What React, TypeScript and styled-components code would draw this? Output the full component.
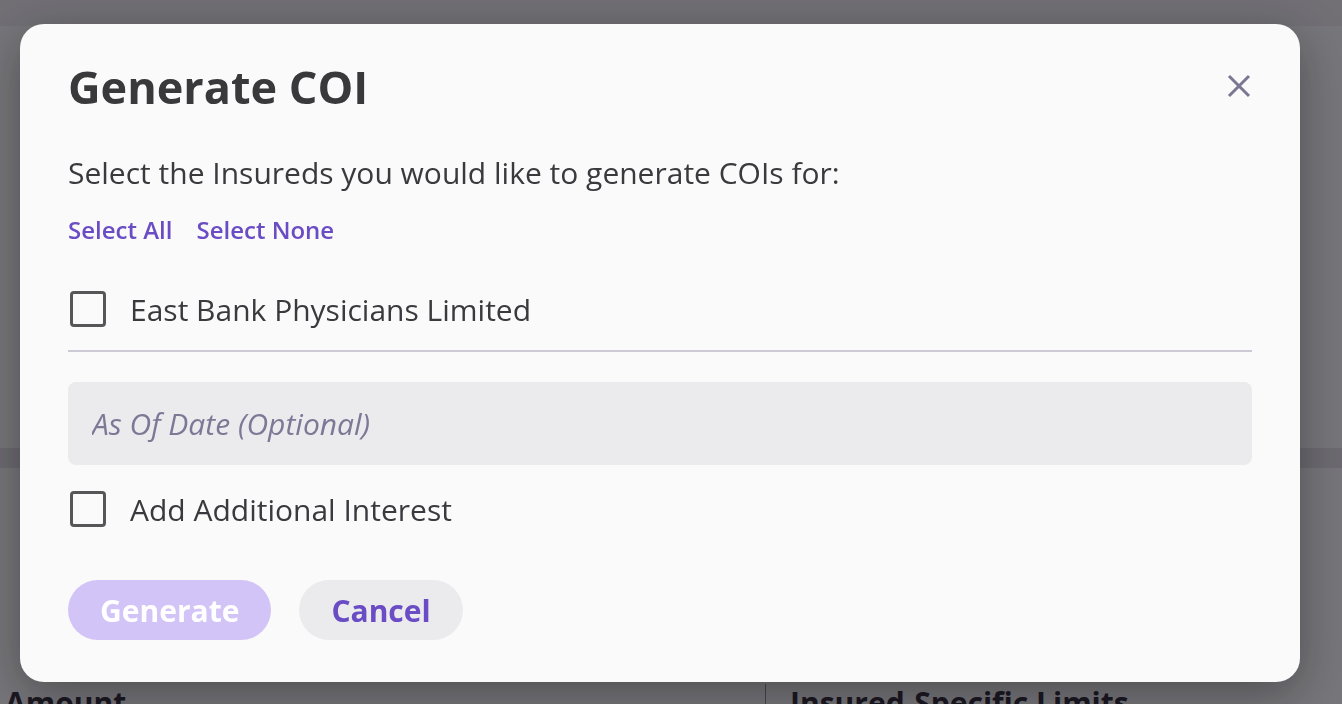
import React, { FC, useState } from "react";
import styled, { createGlobalStyle } from "styled-components";

const GlobalStyle = createGlobalStyle`
    * {
        box-sizing: border-box;
    }

    html, body {
        margin: 0;
        padding: 0;
        height: 100%;
        overflow: hidden;
        font-family: "Open Sans", "Noto Sans", sans-serif;
    }
`

const Page = styled.div`
    position: relative;
    width: 100vw;
    height: 100vh;
    background-color: #f4f4f6;
    display: flex;
    flex-direction: column;
`

const PageTopBar = styled.div`
    height: 26px;
    background-color: #e8e7ec;
`

const PageBody = styled.div`
    flex-grow: 1;
    display: flex;
    flex-direction: column;
    justify-content: flex-end;
`

const PageBand = styled.div`
    height: 20px;
    margin-bottom: 216px;
    background-color: #dddce2;
`

const SectionRow = styled.div`
    display: grid;
    grid-template-columns: 765px 1fr;
    height: 20px;
    overflow: hidden;
`

const SectionTitle = styled.div<{ divided?: boolean }>`
    font-size: 30px;
    font-weight: 700;
    line-height: 1;
    padding: 4px 0 0 ${p => p.divided ? "24px" : "5px"};
    color: #2a2535;
    border-left: ${p => p.divided ? "1px solid #8d8a96" : "none"};
`

const Backdrop = styled.div`
    position: fixed;
    inset: 0;
    background: rgba(16, 14, 20, 0.55);
`

const Modal = styled.div`
    position: fixed;
    top: 24px;
    left: 20px;
    width: 1280px;
    height: 658px;
    background-color: #fafafa;
    border-radius: 24px;
    box-shadow: 0 12px 48px rgba(0, 0, 0, 0.35);
    padding: 47px 48px 0 48px;
    display: flex;
    flex-direction: column;
    color: #3a393d;
`

const Header = styled.div`
    display: flex;
    justify-content: space-between;
    align-items: center;
    height: 30px;
`

const Title = styled.h1`
    margin: 0;
    font-size: 45px;
    font-weight: 700;
    line-height: 1;
    color: #39393b;
`

const CloseButton = styled.button`
    border: none;
    background: none;
    padding: 0;
    margin-right: -1px;
    margin-top: 0;
    width: 28px;
    height: 28px;
    display: flex;
    align-items: center;
    justify-content: center;
    cursor: pointer;
`

const Subtitle = styled.p`
    margin: 52px 0 0 0;
    font-size: 30px;
    line-height: 40px;
`

const Links = styled.div`
    display: flex;
    gap: 24px;
    margin-top: 22px;
`

const LinkButton = styled.button`
    border: none;
    background: none;
    padding: 0;
    font-family: inherit;
    font-size: 24px;
    font-weight: 600;
    line-height: 30px;
    color: #6a4cc4;
    cursor: pointer;
`

const CheckRow = styled.label`
    display: flex;
    align-items: center;
    gap: 24px;
    height: 40px;
    font-size: 30px;
    color: #3a393d;
    cursor: pointer;
`

const Box = styled.span<{ checked: boolean }>`
    width: 36px;
    height: 36px;
    margin-left: 2px;
    border: 3px solid #565558;
    border-radius: 4px;
    background-color: ${p => p.checked ? "#6a4cc4" : "transparent"};
`

const InsuredList = styled.div`
    margin-top: 44px;
    padding-bottom: 21px;
    border-bottom: 2px solid #cdcad6;
`

const DateInput = styled.input`
    margin-top: 30px;
    height: 83px;
    width: 100%;
    border: none;
    border-radius: 8px;
    background-color: #ebebed;
    padding: 0 24px;
    font-family: inherit;
    font-size: 30px;
    color: #3a393d;
    outline: none;

    &::placeholder {
        font-style: italic;
        color: #7e7896;
    }
`

const InterestRow = styled.div`
    margin-top: 24px;
`

const Actions = styled.div`
    display: flex;
    gap: 28px;
    margin-top: 51px;
`

const Button = styled.button<{ primary?: boolean }>`
    height: 60px;
    padding: 0 32px;
    border: none;
    border-radius: 30px;
    font-family: inherit;
    font-size: 30px;
    font-weight: 700;
    background-color: ${p => p.primary ? "#d3c4f8" : "#ebebed"};
    color: ${p => p.primary ? "#ffffff" : "#6a4cc4"};
    cursor: ${p => p.primary ? "default" : "pointer"};
`

const Checkbox: FC<{ label: string, checked: boolean, onToggle: () => void }> = ({ label, checked, onToggle }) => (
    <CheckRow onClick={onToggle}>
        <Box checked={checked} />
        {label}
    </CheckRow>
)

const App = () => {
    const [ selected, setSelected ] = useState(false);
    const [ interest, setInterest ] = useState(false);

    return (
        <>
            <GlobalStyle />
            <Page>
                <PageTopBar />
                <PageBody>
                    <PageBand />
                    <SectionRow>
                        <SectionTitle>Amount</SectionTitle>
                        <SectionTitle divided>Insured-Specific Limits</SectionTitle>
                    </SectionRow>
                </PageBody>
            </Page>
            <Backdrop />
            <Modal>
                <Header>
                    <Title>Generate COI</Title>
                    <CloseButton aria-label="Close">
                        <svg width="24" height="24" viewBox="0 0 24 24">
                            <path d="M2 2 L22 22 M22 2 L2 22" stroke="#7b7692" strokeWidth="3" />
                        </svg>
                    </CloseButton>
                </Header>
                <Subtitle>Select the Insureds you would like to generate COIs for:</Subtitle>
                <Links>
                    <LinkButton onClick={() => setSelected(true)}>Select All</LinkButton>
                    <LinkButton onClick={() => setSelected(false)}>Select None</LinkButton>
                </Links>
                <InsuredList>
                    <Checkbox label="East Bank Physicians Limited" checked={selected} onToggle={() => setSelected(!selected)} />
                </InsuredList>
                <DateInput placeholder="As Of Date (Optional)" />
                <InterestRow>
                    <Checkbox label="Add Additional Interest" checked={interest} onToggle={() => setInterest(!interest)} />
                </InterestRow>
                <Actions>
                    <Button primary disabled>Generate</Button>
                    <Button>Cancel</Button>
                </Actions>
            </Modal>
        </>
    )
}

export default App;
